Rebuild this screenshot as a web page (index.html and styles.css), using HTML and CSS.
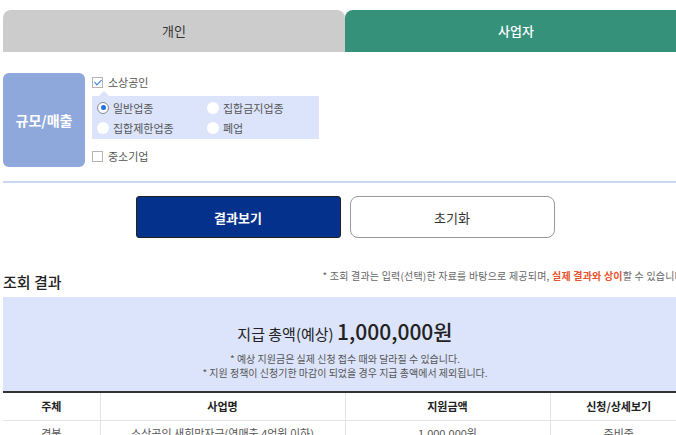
FILE: index.html
```html
<!DOCTYPE html>
<html>

<head>
    <title>지원금 조회</title>
    <meta charset="UTF-8">
    <link rel="stylesheet" href="styles.css">
</head>

<body>
    <div class="wrap">
        <div class="tabs">
            <div class="tab">개인</div>
            <div class="tab active">사업자</div>
        </div>

        <div class="filter">
            <div class="filter-label">규모/매출</div>
            <div class="filter-body">
                <label class="check checked"><span class="box"></span>소상공인</label>
                <div class="sub-options">
                    <label class="radio on"><span class="dot"></span>일반업종</label>
                    <label class="radio"><span class="dot"></span>집합금지업종</label>
                    <label class="radio"><span class="dot"></span>집합제한업종</label>
                    <label class="radio"><span class="dot"></span>폐업</label>
                </div>
                <label class="check"><span class="box"></span>중소기업</label>
            </div>
        </div>

        <div class="actions">
            <button class="btn primary">결과보기</button>
            <button class="btn">초기화</button>
        </div>

        <div class="result-head">
            <h2>조회 결과</h2>
            <p class="notice">* 조회 결과는 입력(선택)한 자료를 바탕으로 제공되며, <em>실제 결과와 상이</em>할 수 있습니다.</p>
        </div>

        <div class="total">
            <p class="total-title">지급 총액(예상) <strong>1,000,000원</strong></p>
            <p class="total-note">* 예상 지원금은 실제 신청 접수 때와 달라질 수 있습니다.</p>
            <p class="total-note">* 지원 정책이 신청기한 마감이 되었을 경우 지급 총액에서 제외됩니다.</p>
        </div>

        <table class="result-table">
            <thead>
                <tr>
                    <th class="c1">주체</th>
                    <th class="c2">사업명</th>
                    <th class="c3">지원금액</th>
                    <th class="c4">신청/상세보기</th>
                </tr>
            </thead>
            <tbody>
                <tr>
                    <td>경북</td>
                    <td>소상공인 새희망자금(연매출 4억원 이하)</td>
                    <td>1,000,000원</td>
                    <td>준비중</td>
                </tr>
            </tbody>
        </table>
    </div>
</body>

</html>
```

FILE: styles.css
```css
* {
    margin: 0;
    padding: 0;
    box-sizing: border-box;
}

body {
    font-family: "Noto Sans CJK KR", "Noto Sans", sans-serif;
    font-size: 11px;
    color: #333;
    background: #fff;
    overflow: hidden;
}

.wrap {
    width: 684px;
    margin-left: 3px;
    padding-top: 10px;
}

/* 탭 */
.tabs {
    display: flex;
}

.tab {
    flex: 1;
    height: 42px;
    line-height: 42px;
    text-align: center;
    font-size: 13px;
    background: #cccccc;
    color: #333;
    border-radius: 8px 8px 0 0;
}

.tab.active {
    background: #35917a;
    color: #fff;
    font-weight: 500;
}

/* 검색 조건 */
.filter {
    display: flex;
    gap: 7px;
    margin-top: 21px;
    padding-bottom: 14px;
    border-bottom: 2px solid #c9d7f1;
}

.filter-label {
    width: 82px;
    height: 94px;
    background: #8fa8dc;
    color: #fff;
    font-size: 14px;
    font-weight: 700;
    border-radius: 6px;
    display: flex;
    align-items: center;
    justify-content: center;
}

.filter-body {
    padding-top: 2px;
}

.check {
    display: flex;
    align-items: center;
    gap: 5px;
    height: 14px;
    color: #555;
}

.check .box {
    width: 11px;
    height: 11px;
    border: 1px solid #b5b5b5;
    background: #fff;
    position: relative;
}

.check.checked .box::after {
    content: "";
    position: absolute;
    left: 3px;
    top: 0;
    width: 3px;
    height: 6px;
    border: solid #2d7fe0;
    border-width: 0 1.5px 1.5px 0;
    transform: rotate(45deg);
}

.sub-options {
    position: relative;
    width: 227px;
    margin: 7px 0 10px;
    padding: 5px 5px 5px;
    background: #dbe4fb;
    display: grid;
    grid-template-columns: 110px 1fr;
    row-gap: 7px;
}

.sub-options::before {
    content: "";
    position: absolute;
    left: 7px;
    top: -5px;
    border: 5px solid transparent;
    border-top: 0;
    border-bottom-color: #dbe4fb;
}

.radio {
    display: flex;
    align-items: center;
    gap: 4px;
    height: 13px;
    color: #555;
}

.radio .dot {
    width: 12px;
    height: 12px;
    border-radius: 50%;
    background: #fff;
    position: relative;
}

.radio.on .dot {
    border: 1px solid #888;
}

.radio.on .dot::after {
    content: "";
    position: absolute;
    left: 2.5px;
    top: 2.5px;
    width: 5px;
    height: 5px;
    border-radius: 50%;
    background: #1a73e8;
}

/* 버튼 */
.actions {
    display: flex;
    justify-content: center;
    gap: 9px;
    margin-top: 13px;
}

.btn {
    width: 205px;
    height: 42px;
    font-family: inherit;
    font-size: 13px;
    color: #333;
    background: #fff;
    border: 1px solid #999;
    border-radius: 8px;
}

.btn.primary {
    background: #03318b;
    border-color: #222;
    border-radius: 3px;
    color: #fff;
    font-weight: 700;
}

/* 조회 결과 */
.result-head {
    display: flex;
    justify-content: space-between;
    align-items: flex-end;
    margin-top: 29px;
    height: 28px;
    white-space: nowrap;
}

.result-head h2 {
    font-size: 15px;
    font-weight: 500;
    color: #222;
    line-height: 20px;
    margin-bottom: 3px;
}

.notice {
    font-size: 10px;
    letter-spacing: 0.2px;
    color: #666;
    margin-bottom: 12px;
}

.notice em {
    font-style: normal;
    font-weight: 700;
    color: #e8532d;
}

.total {
    background: #dce4fb;
    text-align: center;
    height: 94px;
    padding-top: 21px;
    margin-top: 2px;
}

.total-title {
    font-size: 15px;
    line-height: 26px;
    color: #222;
    margin-bottom: 5px;
}

.total-title strong {
    font-size: 21px;
    font-weight: 500;
}

.total-note {
    font-size: 10px;
    color: #555;
    line-height: 14px;
}

/* 결과 표 */
.result-table {
    width: 100%;
    border-collapse: collapse;
    border-top: 2px solid #333;
}

.result-table th,
.result-table td {
    text-align: center;
    border-left: 1px solid #e3e3e3;
    border-bottom: 1px solid #e3e3e3;
}

.result-table th:first-child,
.result-table td:first-child {
    border-left: 0;
}

.result-table th {
    height: 28px;
    font-size: 11px;
    font-weight: 700;
    color: #222;
}

.result-table td {
    height: 26px;
    color: #555;
}

.c1 { width: 97px; }
.c2 { width: 245px; }
.c3 { width: 205px; }
```
